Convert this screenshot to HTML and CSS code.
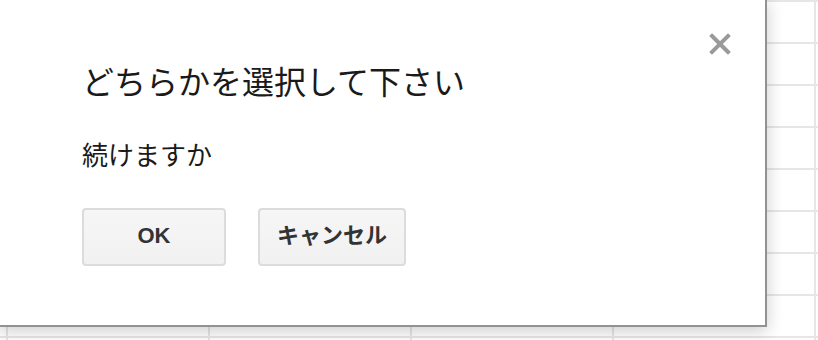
FILE: index.html
```html
<!DOCTYPE html>
<html lang="ja">
<head>
<meta charset="utf-8">
<link rel="stylesheet" href="styles.css">
</head>
<body>
<div class="sheet"></div>
<div class="dialog">
  <button class="close" aria-label="閉じる">
    <svg width="22" height="22" viewBox="0 0 22 22"><path d="M3 3 L19 19 M19 3 L3 19" stroke="#9a9a9a" stroke-width="4" stroke-linecap="square" fill="none"/></svg>
  </button>
  <div class="title">どちらかを選択して下さい</div>
  <div class="message">続けますか</div>
  <div class="actions">
    <button class="btn">OK</button>
    <button class="btn">キャンセル</button>
  </div>
</div>
</body>
</html>
```

FILE: styles.css
```css
html, body {
  margin: 0;
  padding: 0;
}
body {
  width: 818px;
  height: 340px;
  overflow: hidden;
  position: relative;
  background-color: #fff;
  font-family: "Liberation Sans", "Noto Sans CJK JP", sans-serif;
}
.sheet {
  width: 818px;
  height: 340px;
  background-image:
    linear-gradient(to right, #e6e6e6 2px, transparent 2px),
    linear-gradient(to bottom, #e6e6e6 2px, transparent 2px);
  background-size: 202px 42px;
  background-position: 6px 0;
}
.dialog {
  position: absolute;
  left: -2px;
  top: -2px;
  width: 769px;
  height: 329px;
  background: #fff;
  border: 2px solid #929292;
  box-shadow: 0 4px 16px rgba(0, 0, 0, 0.2);
  padding: 60px 0 0 82px;
  box-sizing: border-box;
  display: flex;
  flex-direction: column;
  align-items: flex-start;
}
.close {
  position: absolute;
  top: 33px;
  right: 34px;
  width: 22px;
  height: 22px;
  padding: 0;
  border: 0;
  background: transparent;
  display: flex;
}
.title {
  font-family: "Noto Sans CJK JP", sans-serif;
  font-size: 32px;
  line-height: 40px;
  color: #1a1a1a;
}
.message {
  font-family: "Noto Sans CJK JP", sans-serif;
  font-size: 26px;
  line-height: 32px;
  color: #1a1a1a;
  margin-top: 38px;
}
.actions {
  display: flex;
  gap: 32px;
  margin-top: 38px;
}
.btn {
  box-sizing: border-box;
  min-width: 144px;
  height: 58px;
  padding: 0 17px 3px;
  border: 2px solid #dcdcdc;
  border-radius: 4px;
  background: linear-gradient(#f6f6f6, #f1f1f1);
  color: #333;
  font-family: "Liberation Sans", "Noto Sans CJK JP", sans-serif;
  font-weight: bold;
  font-size: 22px;
  line-height: 26px;
}
```
